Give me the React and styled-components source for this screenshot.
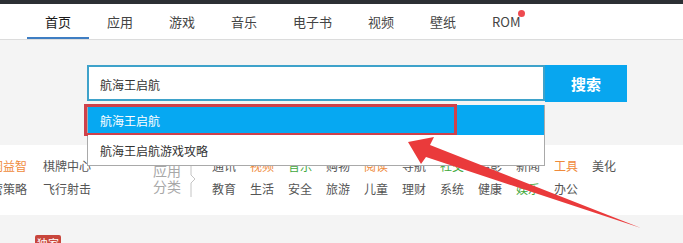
import React from 'react'
import styled, { createGlobalStyle } from 'styled-components'

const GlobalStyle = createGlobalStyle`
  body {
    margin: 0;
    background: #f4f4f4;
    font-family: "Noto Sans CJK SC", "Noto Sans", sans-serif;
    overflow: hidden;
  }
`

const navItems = ['首页', '应用', '游戏', '音乐', '电子书', '视频', '壁纸', 'ROM']

const gameCats = [
    ['休闲益智', 'orange'], ['棋牌中心'],
    ['经营策略'], ['飞行射击'],
]

const appCats = [
    ['通讯'], ['视频', 'orange'], ['音乐', 'green'], ['购物'], ['阅读', 'orange'], ['导航'],
    ['社交', 'green'], ['摄影'], ['新闻'], ['工具', 'orange'], ['美化'],
    ['教育'], ['生活'], ['安全'], ['旅游'], ['儿童'], ['理财'], ['系统'], ['健康'],
    ['娱乐', 'green'], ['办公'],
]

const tones = { orange: '#ef8a3b', green: '#3fa83c' }

export default function App() {
    return (
        <Page>
            <GlobalStyle />
            <TopStrip />
            <Nav>
                {navItems.map((item, i) => (
                    <NavItem key={item} $active={i === 0}>
                        {item}
                        {item === 'ROM' && <Dot />}
                    </NavItem>
                ))}
            </Nav>

            <SearchArea>
                <SearchBar>
                    <InputBox>航海王启航</InputBox>
                    <SearchButton>搜索</SearchButton>
                    <Suggest>
                        <SuggestItem $hover>
                            航海王启航
                            <Highlight />
                        </SuggestItem>
                        <SuggestItem>航海王启航游戏攻略</SuggestItem>
                    </Suggest>
                </SearchBar>
            </SearchArea>

            <CategoryBand>
                <GameGrid>
                    {gameCats.map(([name, tone]) => (
                        <Cat key={name} $tone={tone}>{name}</Cat>
                    ))}
                </GameGrid>
                <AppLabel>
                    应用<br />分类
                </AppLabel>
                <Bracket width="7" height="34" viewBox="0 0 7 34">
                    <polyline points="1,0 1,12 5,16 1,20 1,34" fill="none" stroke="#c4c4c4" strokeWidth="1" />
                </Bracket>
                <AppGrid>
                    {appCats.map(([name, tone], i) => (
                        <Cat key={name + i} $tone={tone}>{name}</Cat>
                    ))}
                </AppGrid>
            </CategoryBand>

            <Bottom>
                <Badge>独家</Badge>
            </Bottom>

            <Arrow width="683" height="243" viewBox="0 0 683 243">
                <polygon
                    points="408,142 434,137 430,145 641,228 426,157 421,164"
                    fill="#ea3a3b"
                />
            </Arrow>
        </Page>
    )
}

const Page = styled.div`
    position: relative;
    width: 683px;
    height: 243px;
    overflow: hidden;
`
const TopStrip = styled.div`
    height: 4px;
    background: #2c2f34;
`
const Nav = styled.div`
    display: flex;
    height: 35px;
    padding-left: 27px;
    background: #fff;
    border-bottom: 1px solid #dcdcdc;
`
const NavItem = styled.div`
    position: relative;
    display: flex;
    align-items: center;
    padding: 0 18px;
    font-size: 13px;
    color: ${p => (p.$active ? '#1a1a1a' : '#444')};
    box-shadow: ${p => (p.$active ? 'inset 0 -2px 0 #3f7ec3' : 'none')};
`
const Dot = styled.span`
    position: absolute;
    top: 6px;
    right: 14px;
    width: 7px;
    height: 7px;
    border-radius: 50%;
    background: #ee4a4f;
`
const SearchArea = styled.div`
    height: 80px;
    padding: 25px 0 0 87px;
`
const SearchBar = styled.div`
    position: relative;
    display: flex;
    width: 540px;
    height: 36px;
`
const InputBox = styled.div`
    flex: 1;
    display: flex;
    align-items: center;
    box-sizing: border-box;
    padding: 3px 0 0 11px;
    border: 2px solid #3ea2ca;
    background: #fff;
    font-size: 12px;
    color: #333;
`
const SearchButton = styled.div`
    width: 82px;
    height: 37px;
    display: flex;
    align-items: center;
    justify-content: center;
    background: #08a6ef;
    color: #fff;
    font-size: 15px;
    font-weight: bold;
`
const Suggest = styled.div`
    position: absolute;
    top: 40px;
    left: 0;
    width: 458px;
    box-sizing: border-box;
    border: 1px solid #a9a9a9;
    border-top: none;
    background: #fff;
    z-index: 2;
`
const SuggestItem = styled.div`
    position: relative;
    height: 30px;
    display: flex;
    align-items: center;
    padding-left: 12px;
    font-size: 12px;
    color: ${p => (p.$hover ? '#fff' : '#333')};
    background: ${p => (p.$hover ? '#06a8f2' : '#fff')};
`
const Highlight = styled.div`
    position: absolute;
    top: -1px;
    left: -4px;
    width: 373px;
    height: 32px;
    box-sizing: border-box;
    border: 3px solid #cf414a;
`
const CategoryBand = styled.div`
    display: flex;
    align-items: flex-start;
    height: 70px;
    box-sizing: border-box;
    padding-top: 9px;
    background: #fff;
`
const GameGrid = styled.div`
    display: grid;
    grid-template-columns: 48px 48px;
    column-gap: 16px;
    margin-left: -21px;
`
const Cat = styled.div`
    height: 23px;
    line-height: 23px;
    font-size: 12px;
    white-space: nowrap;
    color: ${p => tones[p.$tone] || '#555'};
`
const AppLabel = styled.div`
    margin: 8px 0 0 62px;
    font-size: 14px;
    line-height: 16px;
    color: #a8a8a8;
`
const Bracket = styled.svg`
    display: block;
    margin: 9px 0 0 9px;
`
const AppGrid = styled.div`
    display: grid;
    grid-template-columns: repeat(11, 24px);
    column-gap: 14px;
    margin-left: 15px;
`
const Bottom = styled.div`
    display: flex;
    padding: 20px 0 0 35px;
`
const Badge = styled.span`
    padding: 0 2px;
    font-size: 11px;
    line-height: 16px;
    color: #fff;
    background: #c8463c;
    border-radius: 2px;
`
const Arrow = styled.svg`
    position: absolute;
    top: 0;
    left: 0;
    pointer-events: none;
    z-index: 3;
`
